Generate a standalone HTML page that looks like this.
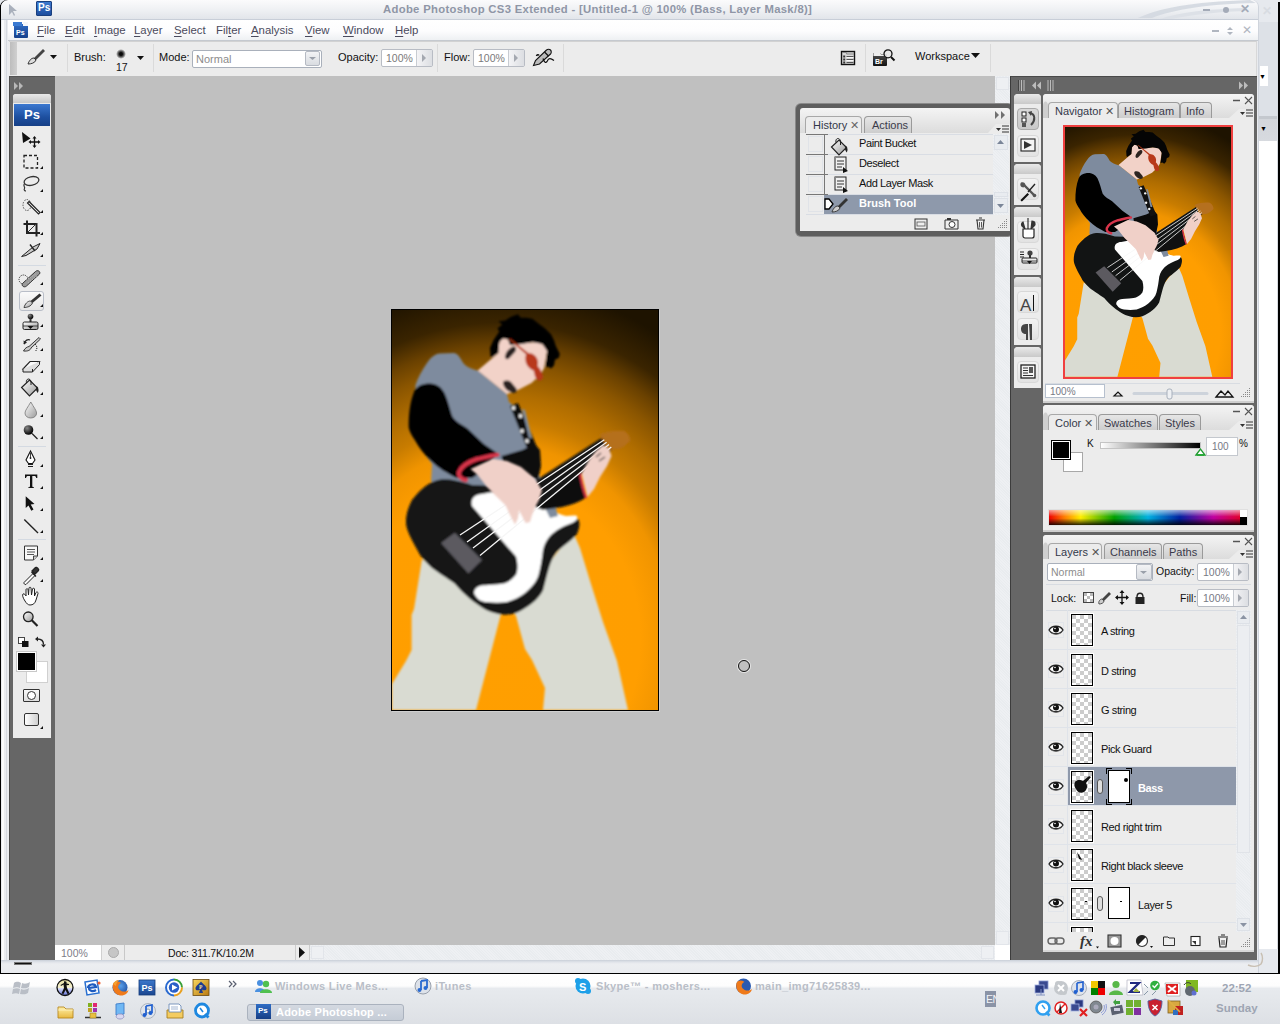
<!DOCTYPE html>
<html><head><meta charset="utf-8">
<style>
*{margin:0;padding:0;box-sizing:border-box}
html,body{width:1280px;height:1024px;overflow:hidden;background:#e6e9ee;font-family:"Liberation Sans",sans-serif;font-size:11px;color:#111}
.a{position:absolute}
.t{position:absolute;white-space:nowrap;line-height:1}
svg{position:absolute;overflow:visible}
.tab{position:absolute;height:16px;border:1px solid #9a9a9a;border-bottom:none;border-radius:4px 4px 0 0;background:linear-gradient(#e6e6e6,#cdcdcd);font-size:11px;color:#3a3a4a;padding:2px 0 0 7px;white-space:nowrap;line-height:12px}
.tab.on{background:#ececec;border-color:#a8a8a8;color:#33384a}
.ph{position:absolute;background:linear-gradient(#f4f4f4,#dcdcdc);border-radius:3px 3px 0 0}
.pb{position:absolute;background:#ececec}
.row{position:absolute;left:0;width:168px;height:39px;border-top:1px solid #dfe3e9}
.eye{position:absolute;left:4px;top:12px;width:16px;height:16px;border:1px solid #e2e5ea;background:#ededed}
.th{position:absolute;left:27px;top:4px;width:22px;height:32px;border:1px solid #000;box-shadow:0 0 0 1px #fff;background-color:#fff;background-image:linear-gradient(45deg,#ccc 25%,transparent 25%,transparent 75%,#ccc 75%),linear-gradient(45deg,#ccc 25%,transparent 25%,transparent 75%,#ccc 75%);background-size:8px 8px;background-position:4px 0,0 4px}
.ln{position:absolute;top:15px;font-size:11px;color:#111;letter-spacing:-0.4px}
.tb{position:absolute;width:22px;height:22px;border:1px solid #d8d8d8;border-radius:4px;background:linear-gradient(#f3f3f3,#e2e2e2)}
.tg{position:absolute;left:1014px;width:27px;background:#ececec;border-radius:4px 4px 0 0}
.tgh{position:absolute;left:0;top:0;width:27px;height:10px;background:linear-gradient(#e9e9e9,#c9c9c9);border-radius:4px 4px 0 0}
</style></head><body>
<!-- background window at right -->
<div class="a" style="left:1252px;top:0;width:28px;height:974px;background:#e6e9ee;border-radius:0 7px 0 0"></div>
<div class="a" style="left:1259px;top:22px;width:19px;height:94px;background:#dde1e7"></div>
<div class="a" style="left:1260px;top:66px;width:8px;height:20px;background:#fff"></div>
<div class="t" style="left:1259px;top:73px;font-size:7px;color:#000">▼</div>
<div class="a" style="left:1259px;top:116px;width:19px;height:25px;background:linear-gradient(#c4c8ce 0,#c4c8ce 3px,#d3d6db 3px,#d7dadf 100%)"></div>
<div class="t" style="left:1260px;top:125px;font-size:7px;color:#000">▼</div>
<div class="a" style="left:1259px;top:141px;width:18px;height:808px;background:#fff"></div>
<div class="a" style="left:1277px;top:22px;width:1px;height:927px;background:#d8dce2"></div>
<div class="a" style="left:1278px;top:2px;width:2px;height:972px;background:#000"></div>
<div class="t" style="left:1262px;top:5px;font-size:12px;color:#d8dce2;font-weight:bold">✕</div>
<!-- main window frame -->
<div class="a" style="left:0;top:0;width:1259px;height:974px;background:#e9ebef;border-radius:7px 7px 0 0;border-right:1px solid #cfd4dc"></div>
<div class="a" style="left:0;top:5px;width:1px;height:969px;background:#000"></div>
<div class="a" style="left:0;top:0;width:8px;height:8px;border-top:1px solid #000;border-left:1px solid #000;border-radius:7px 0 0 0"></div>
<div class="a" style="left:2px;top:20px;width:2px;height:940px;background:#fafbfc"></div>
<div class="a" style="left:6px;top:20px;width:1px;height:940px;background:#d5d9e0"></div>
<div class="a" style="left:0;top:973px;width:1280px;height:1px;background:#000"></div>

<!-- title bar -->
<div class="a" style="left:1px;top:0;width:1257px;height:20px;background:linear-gradient(#fbfbfc,#eef0f3 55%,#e2e5ea);border-radius:7px 7px 0 0;border-bottom:1px solid #c8ced8"></div>
<svg style="left:1120px;top:0" width="140" height="20"><path d="M18,18 C40,8 70,2 130,0 L136,3 C90,4 55,9 32,18 Z" fill="#d3d8e0" opacity="0.9"/><path d="M40,19 C60,12 90,9 125,8 L126,11 C95,12 70,15 52,19 Z" fill="#dde1e7"/></svg>
<svg style="left:6px;top:2px" width="14" height="16"><path d="M3,2 L3,13 L6,10 L8,14 L9,13 L7,9 L11,9 Z" fill="#a9b0bc"/></svg>
<div class="a" style="left:36px;top:1px;width:16px;height:15px;background:linear-gradient(#3d7ad0,#1c4d9e);border:1px solid #1a3f7e;border-radius:1px"></div>
<div class="t" style="left:38px;top:3px;font-size:10px;font-weight:bold;color:#fff">Ps</div>
<div class="t" style="left:383px;top:4px;font-size:11.3px;font-weight:bold;color:#8f96a6;letter-spacing:0.31px">Adobe Photoshop CS3 Extended - [Untitled-1 @ 100% (Bass, Layer Mask/8)]</div>
<div class="a" style="left:1203px;top:9px;width:7px;height:2px;background:#a4abb8"></div>
<div class="a" style="left:1223px;top:7px;width:6px;height:6px;background:#a4abb8;border-radius:50%"></div>
<div class="t" style="left:1240px;top:3px;font-size:12px;font-weight:bold;color:#a4abb8">✕</div>

<!-- menu bar -->
<div class="a" style="left:8px;top:20px;width:1250px;height:21px;background:linear-gradient(#ffffff 0%,#fdfdfe 55%,#eef0f3 100%);border-bottom:1px solid #c5c9cf"></div>
<div class="a" style="left:14px;top:24px;width:14px;height:14px;background:linear-gradient(#2e6bc4,#17418c);border-radius:1px"></div>
<div class="a" style="left:13px;top:22px;width:9px;height:4px;background:#3a7ad2"></div>
<div class="a" style="left:23px;top:22px;width:5px;height:4px;background:#f4f6fa"></div>
<div class="t" style="left:16px;top:29px;font-size:7px;font-weight:bold;color:#fff">Ps</div>
<div class="t" style="left:37px;top:25px;font-size:11.4px;color:#4a4a5c;text-decoration-thickness:1px;text-underline-offset:2px">
<span style="position:absolute;left:0"><u>F</u>ile</span>
<span style="position:absolute;left:28px"><u>E</u>dit</span>
<span style="position:absolute;left:57px"><u>I</u>mage</span>
<span style="position:absolute;left:97px"><u>L</u>ayer</span>
<span style="position:absolute;left:137px"><u>S</u>elect</span>
<span style="position:absolute;left:179px">Fil<u>t</u>er</span>
<span style="position:absolute;left:214px"><u>A</u>nalysis</span>
<span style="position:absolute;left:268px"><u>V</u>iew</span>
<span style="position:absolute;left:306px"><u>W</u>indow</span>
<span style="position:absolute;left:358px"><u>H</u>elp</span>
</div>
<div class="a" style="left:1212px;top:30px;width:7px;height:2px;background:#b0b6c0"></div>
<svg style="left:1226px;top:26px" width="8" height="10"><path d="M1,4 L4,1 L7,4 Z M1,6 L4,9 L7,6 Z" fill="#b0b6c0"/></svg>
<div class="t" style="left:1242px;top:24px;font-size:12px;color:#b0b6c0">✕</div>

<!-- options bar -->
<div class="a" style="left:9px;top:41px;width:1248px;height:35px;background:#ececec;border-top:1px solid #d2d2d2;border-right:1px solid #d8d8d8"></div>
<div class="a" style="left:10px;top:42px;width:7px;height:33px;background:linear-gradient(90deg,#bdbdbd,#d0d0d0)"></div>
<div class="a" style="left:67px;top:44px;width:1px;height:28px;background:#dadada"></div>
<div class="a" style="left:153px;top:44px;width:1px;height:28px;background:#dadada"></div>
<div class="a" style="left:437px;top:44px;width:1px;height:28px;background:#dadada"></div>
<div class="a" style="left:865px;top:44px;width:1px;height:28px;background:#dadada"></div>
<div class="a" style="left:990px;top:44px;width:1px;height:28px;background:#dadada"></div>
<div class="a" style="left:563px;top:44px;width:1px;height:28px;background:#dadada"></div>
<svg style="left:26px;top:47px" width="22" height="20"><path d="M17,2 L19,4 L10,13 L8,11 Z" fill="#444"/><path d="M8,11 C5,11 3,14 2,17 C5,17 9,16 10,13 Z" fill="#ddd" stroke="#333" stroke-width="1"/></svg>
<svg style="left:50px;top:55px" width="8" height="5"><path d="M0,0 L7,0 L3.5,4 Z" fill="#111"/></svg>
<div class="t" style="left:74px;top:52px;font-size:11px;color:#111">Brush:</div>
<div class="a" style="left:116px;top:49px;width:10px;height:10px;border-radius:50%;background:radial-gradient(circle,#000 0,#111 22%,rgba(0,0,0,0.55) 45%,rgba(0,0,0,0) 70%)"></div>
<div class="t" style="left:116px;top:62px;font-size:10.5px;color:#111">17</div>
<svg style="left:137px;top:56px" width="8" height="5"><path d="M0,0 L7,0 L3.5,4 Z" fill="#111"/></svg>
<div class="t" style="left:159px;top:52px;font-size:11px;color:#111">Mode:</div>
<div class="a" style="left:192px;top:50px;width:130px;height:18px;background:#fff;border:1px solid #a9b0bb;border-radius:2px"></div>
<div class="a" style="left:305px;top:51px;width:15px;height:15px;background:linear-gradient(#f2f3f5,#d9dce1);border:1px solid #b5bac3;border-radius:2px"></div>
<svg style="left:309px;top:57px" width="8" height="4"><path d="M0,0 L7,0 L3.5,3 Z" fill="#9aa0aa"/></svg>
<div class="t" style="left:196px;top:54px;font-size:11px;color:#8c8c8c">Normal</div>
<div class="t" style="left:338px;top:52px;font-size:11px;color:#111">Opacity:</div>
<div class="a" style="left:381px;top:49px;width:52px;height:18px;background:#fff;border:1px solid #b8bcc4;border-radius:2px"></div>
<div class="a" style="left:416px;top:50px;width:16px;height:16px;background:linear-gradient(90deg,#f4f4f6,#dcdee2);border-left:1px solid #c8ccd2"></div>
<svg style="left:422px;top:54px" width="5" height="8"><path d="M0,0 L4,4 L0,8 Z" fill="#a4a8b0"/></svg>
<div class="t" style="left:386px;top:53px;font-size:10.5px;color:#7a7a7a">100%</div>
<div class="t" style="left:444px;top:52px;font-size:11px;color:#111">Flow:</div>
<div class="a" style="left:473px;top:49px;width:52px;height:18px;background:#fff;border:1px solid #b8bcc4;border-radius:2px"></div>
<div class="a" style="left:508px;top:50px;width:16px;height:16px;background:linear-gradient(90deg,#f4f4f6,#dcdee2);border-left:1px solid #c8ccd2"></div>
<svg style="left:514px;top:54px" width="5" height="8"><path d="M0,0 L4,4 L0,8 Z" fill="#a4a8b0"/></svg>
<div class="t" style="left:478px;top:53px;font-size:10.5px;color:#7a7a7a">100%</div>
<svg style="left:533px;top:48px" width="24" height="20"><path d="M0.5,17.5 L2.5,12.5 L13.5,2 C14.5,1 16.5,1 17.5,2 C18.5,3 18.5,5 17.5,6 L6.5,16 Z" fill="#bbb" stroke="#111" stroke-width="1.1"/><path d="M11.5,4 L15.5,8" stroke="#111" stroke-width="1.2"/><path d="M3.5,8 C4,6.5 5.5,6.5 6,7.5" stroke="#111" stroke-width="1.6" fill="none"/><path d="M10,10.5 C11,14.5 13,15.5 14.3,13 C15.5,10 17.5,10 21,12.5" fill="none" stroke="#111" stroke-width="1.2"/></svg>
<svg style="left:840px;top:50px" width="17" height="17"><rect x="1.5" y="1.5" width="13" height="13" fill="#d8d8d8" stroke="#111" stroke-width="1.4"/><path d="M2,2.5 H6 L7,4 H14" stroke="#888" stroke-width="1.2" fill="none"/><rect x="3.2" y="5.5" width="2" height="2" fill="#333"/><rect x="3.2" y="8.5" width="2" height="2" fill="#333"/><rect x="3.2" y="11.5" width="2" height="2" fill="#333"/><path d="M6.5,6.5 H13.5 M6.5,9.5 H13.5 M6.5,12.5 H13.5" stroke="#555" stroke-width="1.2"/><path d="M6.5,7.5 H13.5 M6.5,10.5 H13.5" stroke="#fff" stroke-width="0.8"/></svg>
<svg style="left:872px;top:49px" width="26" height="18"><defs><linearGradient id="brg" x1="0" y1="0" x2="0" y2="1"><stop offset="0" stop-color="#555"/><stop offset="1" stop-color="#111"/></linearGradient></defs><path d="M1,4 H8 L9,5 H15 V16 C15,16.5 14.5,17 14,17 H2 C1.5,17 1,16.5 1,16 Z" fill="url(#brg)"/><path d="M1.5,4 H8 L9,5.5 H13 V7 H1.5 Z" fill="#eee"/><text x="3" y="14.5" font-size="7" font-family="Liberation Sans" font-weight="bold" fill="#fff">Br</text><circle cx="16" cy="4.8" r="4" fill="#e8e8e8" fill-opacity="0.9" stroke="#111" stroke-width="1.3"/><path d="M19,8 L22.5,11.5" stroke="#111" stroke-width="2"/></svg>
<div class="t" style="left:915px;top:51px;font-size:11px;color:#111">Workspace</div>
<svg style="left:971px;top:53px" width="10" height="6"><path d="M0,0 L9,0 L4.5,5 Z" fill="#111"/></svg>
<!-- workspace -->
<div class="a" style="left:9px;top:76px;width:1248px;height:885px;background:#c0c0c0"></div>
<!-- tools dark column -->
<div class="a" style="left:9px;top:76px;width:46px;height:884px;background:#666;border-left:1px solid #4e4e4e;border-top:1px solid #555"></div>
<svg style="left:14px;top:82px" width="12" height="8"><path d="M0,0 L4,4 L0,8 Z M5,0 L9,4 L5,8 Z" fill="#b8b8b8"/></svg>
<div class="a" style="left:13px;top:94px;width:38px;height:644px;background:#ececec;border-radius:3px 3px 0 0"></div>
<div class="a" style="left:13px;top:94px;width:38px;height:9px;background:linear-gradient(#e8e8e8,#c8c8c8);border-radius:3px 3px 0 0"></div>
<div class="a" style="left:14px;top:104px;width:36px;height:22px;background:linear-gradient(#3b78d0,#1d4f9f 60%,#163f86)"></div>
<div class="t" style="left:24px;top:108px;font-size:13px;font-weight:bold;color:#fff">Ps</div>
<div class="a" style="left:18px;top:265px;width:28px;height:1px;background:#d4dae2"></div>
<div class="a" style="left:18px;top:446px;width:28px;height:1px;background:#d4dae2"></div>
<div class="a" style="left:18px;top:539px;width:28px;height:1px;background:#d4dae2"></div>
<div class="a" style="left:19px;top:291px;width:25px;height:20px;border:1px solid #b9bec8;border-radius:3px;background:linear-gradient(#fafafa,#e6e6e6)"></div>
<svg style="left:13px;top:94px" width="38" height="644">
<defs>
<linearGradient id="tg1" x1="0" y1="0" x2="1" y2="1"><stop offset="0" stop-color="#fff"/><stop offset="1" stop-color="#9a9a9a"/></linearGradient>
<radialGradient id="tg2" cx="0.35" cy="0.3" r="0.7"><stop offset="0" stop-color="#888"/><stop offset="1" stop-color="#000"/></radialGradient>
</defs>
<path fill="#111" d="M27,75 l3,0 l0,-3 z M27,98 l3,0 l0,-3 z M27,119 l3,0 l0,-3 z M27,141 l3,0 l0,-3 z M27,163 l3,0 l0,-3 z M27,191 l3,0 l0,-3 z M27,213 l3,0 l0,-3 z M27,233 l3,0 l0,-3 z M27,257 l3,0 l0,-3 z M27,279 l3,0 l0,-3 z M27,301 l3,0 l0,-3 z M27,323 l3,0 l0,-3 z M27,345 l3,0 l0,-3 z M27,373 l3,0 l0,-3 z M27,395 l3,0 l0,-3 z M27,417 l3,0 l0,-3 z M27,439 l3,0 l0,-3 z M27,466 l3,0 l0,-3 z M27,488 l3,0 l0,-3 z M27,635 l3,0 l0,-3 z"/>
<!-- move -->
<path d="M9,38 L17.5,44.5 L10,49 Z" fill="#111"/>
<path d="M21.5,43.5 V52.5 M17,48 H26" stroke="#111" stroke-width="1.3"/>
<path d="M21.5,42 l-2,2.5 h4 z M21.5,54 l-2,-2.5 h4 z M15.5,48 l2.5,-2 v4 z M27.5,48 l-2.5,-2 v4 z" fill="#111"/>
<!-- marquee -->
<rect x="11" y="61.5" width="13.5" height="12.5" fill="none" stroke="#222" stroke-width="1.3" stroke-dasharray="3,2"/>
<!-- lasso -->
<ellipse cx="18.5" cy="87" rx="7.5" ry="4.3" fill="none" stroke="#333" stroke-width="1.3" transform="rotate(-12 18.5 87)"/>
<path d="M11.5,89.5 C9.5,92 12.5,93 11.5,94.5 C10.5,96 12,97 13,97" fill="none" stroke="#333" stroke-width="1.2"/>
<!-- quick selection -->
<ellipse cx="14" cy="111" rx="4" ry="5.5" fill="none" stroke="#555" stroke-width="1" stroke-dasharray="1.5,1.2"/>
<path d="M16,107.5 L27,118.5 L25.5,120 L14.5,109 Z" fill="#fafafa" stroke="#222" stroke-width="1.2"/>
<!-- crop -->
<path d="M14,126.5 V139 H27 M10.5,130 H23.5 V142.5" fill="none" stroke="#222" stroke-width="2"/>
<path d="M14.5,138.5 L24,129" stroke="#333" stroke-width="1"/>
<!-- slice -->
<path d="M8.6,162.5 L20,153 L27,149.5 L24,155 L13,161.5 Z" fill="url(#tg1)" stroke="#222" stroke-width="1"/><path d="M17,150.5 L22,157" stroke="#222" stroke-width="1.4"/>
<!-- healing -->
<circle cx="10.5" cy="185.5" r="4.5" fill="none" stroke="#333" stroke-dasharray="1.2,1"/>
<path d="M9.5,189.5 L22.5,177.5 C24.5,175.5 28,177.5 26.5,180 L13.5,192 C11.5,194 8,192 9.5,189.5 Z" fill="#9a9a9a" stroke="#333" stroke-width="1"/>
<path d="M13,186 L23,180 M15,189 L24,182" stroke="#ccc" stroke-width="0.8" stroke-dasharray="1,1.5"/>
<!-- brush -->
<path d="M26.5,199.5 L28.5,201.5 L19.5,209 L17.5,207 Z" fill="#333"/><path d="M17.5,207 C14.5,207 12,210 11,213.5 C14,213.5 18,212.5 19.5,209 Z" fill="url(#tg1)" stroke="#333" stroke-width="0.9"/>
<!-- clone stamp -->
<circle cx="17.5" cy="222.5" r="2.8" fill="url(#tg2)"/><rect x="16.5" y="224.5" width="2" height="4" fill="#333"/><rect x="10" y="228" width="15" height="7.5" rx="1.5" fill="url(#tg1)" stroke="#222" stroke-width="1"/><path d="M10,232 H25" stroke="#222" stroke-width="0.8"/><path d="M14.5,232 l3,3 l3,-3 z" fill="#111"/>
<!-- history brush -->
<path d="M10.5,257 C12,254 14,253 16,252.5 L26,243.5 L27.5,245 L18,254 C17.5,256 15,257.5 10.5,257 Z" fill="url(#tg1)" stroke="#222" stroke-width="0.9"/>
<path d="M11,250 C12,246 15,245 17,246" fill="none" stroke="#222" stroke-width="1.2"/><path d="M10.5,246.5 l0.5,4 l3,-2 z" fill="#222"/>
<path d="M22,250 C24.5,252 24.5,256 22,257.5" fill="none" stroke="#222" stroke-dasharray="1.2,1"/>
<!-- eraser -->
<path d="M10,275 L17,267.5 L26.5,267.5 L19.5,275 Z" fill="#fafafa" stroke="#222" stroke-width="1.1"/><path d="M10,275 V278 H19.5 L26.5,270.5 V267.5 M19.5,275 V278" fill="#ddd" stroke="#222" stroke-width="1"/>
<!-- paint bucket -->
<path d="M8.6,293.5 L16.5,286 L24.5,294 L16.5,302 Z" fill="url(#tg1)" stroke="#222" stroke-width="1.2"/><path d="M13.5,289 C12.5,284.5 17,283.5 18,287.5 L18,291" fill="none" stroke="#222" stroke-width="1"/><path d="M23.5,292 C26,294 26,297.5 24.5,299 L23,296 Z" fill="#222"/>
<!-- blur -->
<path d="M17.8,308 C15,313 12,316.5 12,319 C12,322 14.5,324 17.8,324 C21,324 23.6,322 23.6,319 C23.6,316.5 20.5,313 17.8,308 Z" fill="url(#tg1)" stroke="#777" stroke-width="0.8"/>
<!-- dodge/burn -->
<circle cx="15.5" cy="336" r="4.8" fill="url(#tg2)"/><path d="M19,339.5 L24.5,345" stroke="#222" stroke-width="1.3"/>
<!-- pen -->
<path d="M17.5,357 L13,366 L15.5,369.5 H19.5 L22,366 Z" fill="#fff" stroke="#111" stroke-width="1.1"/><circle cx="17.5" cy="364" r="0.9" fill="#111"/><path d="M17.5,359 V363" stroke="#111" stroke-width="0.8"/><path d="M15,370.5 H20 M15,372.5 H20" stroke="#222" stroke-width="1.1"/>
<!-- type -->
<path d="M12,380.5 H24.3 V384 H23.2 C23,382.5 22.5,382 21,382 H19.3 V392 C19.3,393 19.8,393.3 21,393.3 V394 H15.3 V393.3 C16.5,393.3 17,393 17,392 V382 H15.3 C13.8,382 13.3,382.5 13.1,384 H12 Z" fill="#111"/>
<!-- path selection -->
<path d="M12.7,402.3 L12.7,414 L15.5,411.5 L18.3,416.7 L20.5,415.6 L17.7,410.5 L21.5,410 Z" fill="#111"/>
<!-- line -->
<path d="M11.3,425.5 L25,439" stroke="#222" stroke-width="1.4"/>
<!-- notes -->
<path d="M11.5,452 H24.5 V462 L20.5,466 H11.5 Z" fill="#f8f8f8" stroke="#333" stroke-width="1"/><path d="M20.5,466 V462 H24.5" fill="#ccc" stroke="#333" stroke-width="0.9"/><path d="M14,455.5 H22 M14,458 H22 M14,460.5 H21" stroke="#444" stroke-width="0.9"/>
<!-- eyedropper -->
<path d="M11,488.5 L20,479.5 L22,481.5 L13,490.5 C12,491 10.5,489.5 11,488.5 Z" fill="#fafafa" stroke="#222" stroke-width="1"/><path d="M19,477 L22.5,473.5 C23.5,472.5 26.5,475.5 25.5,476.5 L22,480 Z M18.5,478 L23,482.5" fill="#333" stroke="#222" stroke-width="1.3"/>
<!-- hand -->
<path d="M12,507 C10,504 9,501 10,500 C11,499 12.5,501 13,502 L13,495.5 C13,494.5 15,494.5 15,495.5 L15.5,501 L16,494 C16,493 18,493 18,494 L18.5,501 L19.5,495 C19.5,494 21.5,494 21.5,495 L21.5,502 L23,498.5 C23.5,497.5 25.5,498 25,499.5 L23,506 C22,509.5 20,511 17,511 C15,511 13.5,509.5 12,507 Z" fill="#fff" stroke="#222" stroke-width="1"/>
<!-- zoom -->
<circle cx="15.3" cy="522.8" r="4.8" fill="url(#tg1)" stroke="#222" stroke-width="1.3"/><path d="M18.8,526.3 L24.5,532" stroke="#222" stroke-width="2.2"/>
<!-- default colors / swap -->
<rect x="5.5" y="543.5" width="6" height="6" fill="#fff" stroke="#333" stroke-width="0.9"/><rect x="9" y="547" width="6.5" height="6" fill="#111"/>
<path d="M24.5,545 C28.5,545 30.5,547 30.5,550.5" fill="none" stroke="#222" stroke-width="1.3"/><path d="M22,545 l3,-2.5 v5 z M30.5,553.5 l-2.5,-3 h5 z" fill="#222"/>
</svg>
<div class="a" style="left:26px;top:661px;width:22px;height:22px;background:#fff;border:1px solid #d0d0d0"></div>
<div class="a" style="left:16px;top:651px;width:21px;height:21px;background:#000;border:1px solid #c8c8c8;box-shadow:inset 0 0 0 1px #fff"></div>
<div class="a" style="left:23px;top:689px;width:17px;height:13px;border:1px solid #333;border-radius:1px;background:linear-gradient(#fafafa,#ddd)"></div>
<div class="a" style="left:27px;top:691px;width:9px;height:9px;border:1px solid #333;border-radius:50%;background:#fff"></div>
<div class="a" style="left:24px;top:713px;width:15px;height:13px;border:1px solid #333;border-radius:2px;background:linear-gradient(90deg,#fff,#cfcfcf)"></div>


<!-- canvas doc scrollbars -->
<div class="a" style="left:995px;top:76px;width:15px;height:870px;background-color:#eef0f3;background-image:repeating-linear-gradient(45deg,#e9ecef 0 1px,transparent 1px 2px)"></div>
<div class="a" style="left:996px;top:77px;width:13px;height:13px;background:#eef0f3;border:1px solid #e2e5ea"></div>
<div class="a" style="left:996px;top:931px;width:13px;height:14px;background:#eef0f3;border:1px solid #e2e5ea"></div>
<!-- status bar -->
<div class="a" style="left:55px;top:945px;width:955px;height:15px;background-color:#eef0f3;background-image:repeating-linear-gradient(45deg,#e9ecef 0 1px,transparent 1px 2px)"></div>
<div class="a" style="left:55px;top:945px;width:47px;height:15px;background:#fff;border-right:1px solid #d0d0d0"></div>
<div class="t" style="left:61px;top:948px;font-size:10.5px;color:#7d7d88">100%</div>
<div class="a" style="left:102px;top:945px;width:23px;height:15px;background:#ececec;border-right:1px solid #c8c8c8"></div>
<div class="a" style="left:108px;top:947px;width:11px;height:11px;border-radius:50%;background:#c6c6c6;border:1px solid #aaa"></div>
<div class="a" style="left:125px;top:945px;width:170px;height:15px;background:#ececec"></div>
<div class="t" style="left:168px;top:948px;font-size:10.5px;color:#111;letter-spacing:-0.2px">Doc: 311.7K/10.2M</div>
<div class="a" style="left:295px;top:945px;width:15px;height:15px;background:#ececec;border-left:1px solid #ccc;border-right:1px solid #ccc"></div>
<svg style="left:299px;top:947px" width="8" height="11"><path d="M0,0 L6,5.5 L0,11 Z" fill="#111"/></svg>
<div class="a" style="left:995px;top:945px;width:15px;height:15px;background:#fff"></div>
<div class="a" style="left:981px;top:946px;width:13px;height:13px;background:#eef0f3;border:1px solid #e2e5ea"></div>
<div class="a" style="left:311px;top:946px;width:13px;height:13px;background:#eef0f3;border:1px solid #e2e5ea"></div>
<!-- artwork symbol -->
<svg width="0" height="0" style="position:absolute">
<defs>
<radialGradient id="bg" cx="107" cy="330" r="355" gradientUnits="userSpaceOnUse" gradientTransform="translate(107 330) scale(0.886 1) translate(-107 -330)">
<stop offset="0" stop-color="#ff9f00"/>
<stop offset="0.45" stop-color="#ff9e00"/>
<stop offset="0.55" stop-color="#f09400"/>
<stop offset="0.62" stop-color="#c87c00"/>
<stop offset="0.69" stop-color="#b06d00"/>
<stop offset="0.774" stop-color="#8a5500"/>
<stop offset="0.83" stop-color="#6a4100"/>
<stop offset="0.894" stop-color="#3a2400"/>
<stop offset="1.0" stop-color="#1e1300"/>
</radialGradient>

<symbol id="art" viewBox="0 0 266 400">
<g>
<!-- pants -->
<path fill="#d9dbd2" d="M30,249 L110,300 L84,400 L0,400 L0,374 L14,351 L19.6,340 L19.6,305 L22,299 Z"/>
<path fill="#d9dbd2" d="M120,300 L150,262 L181,222 L188,238 L199,274 L211,312 L225,351 L236,400 L151,400 L153,378 L140,350 L133,339 L124,306 Z"/>
<!-- shirt -->
<path fill="#7e8b9e" d="M23.5,75 C26,68 30,60 35,53 C39,47 43,44 48,43.5 L62,43 C67,44 69,50 72,54 C75,57 80,59.5 86.4,60.8 L115,84 L117,92 L121,95 L135,125 L140,139 L150,175 L165,206 L140,215 L60,190 L39,171 L40,154 L23,130 Z"/>
<!-- neck & face -->
<path fill="#f2d2c8" d="M85.8,60.4 L106.3,42.9 C106,35 108,28.5 111.5,28.2 C115,28 118,31 118,34 L131,33 L146,32 C151,34 155,37 155,42 L152,58.5 L148,65 L139.5,73 L126,80 L115,84 Z"/>
<!-- hair -->
<path fill="#050505" d="M98.5,45.8 L98,38 L101.4,30.2 L107.3,21.4 L105.5,18.4 L110.2,14.5 L106.5,11.2 L113.2,10.6 L119,6.7 L125.9,4.3 L128.8,7.7 L134.6,7.7 L140.5,8.7 L146.4,13.6 L153.2,18.4 L159,24.3 L162,30.2 L163.9,36 L167.8,43.8 L166.9,47.7 L163,49.7 L162,55.5 L159,58.5 L156,56.5 L153.2,57.5 L155.1,40.9 L150.3,34 L140.5,32.1 L129.8,34 L118,35 L116,29.2 L111.2,28.2 L107.3,32.1 L106.3,42.9 L99.5,47.7 Z"/>
<!-- sideburn & goatee -->
<path fill="#2c2420" d="M113,47 C113,43 117,38 121,36.5 C124,36 125,39 123,42 L117,48.5 C115,50 113,49 113,47 Z"/>
<path fill="#2c2420" d="M111,73 C111,70 116,70 119,72 L124,78 C126,81 124,83 121,83 C116,82 111,77 111,73 Z"/>
<!-- glasses -->
<path fill="#b8391a" d="M116.5,29 L118,28.8 L137.5,44 L136,46 Z"/>
<path fill="#b8391a" d="M134.5,44 C138,42 143,44 145,48.5 C146.5,51.5 146,55 145.5,56 C148.5,59 151,63.5 150.8,67.5 C150.3,70.5 147,71.5 144.8,69.5 C142.5,67 142.5,63 141.5,60.5 C137.5,59 134,55 133.5,50.5 C133.2,47.5 133.5,45 134.5,44 Z"/>
<!-- left black sleeve -->
<path fill="#000" d="M16.7,117.5 C16.5,105 18,92 22,82 C24,77 28,74.5 35,73.5 C42,73 48,75 52,82 C56,90 58,100 60.4,106.6 C64,112 70,115 75.5,118.5 L91.9,134 L105,143 L96,158 L80,168 L64.5,168 C55,163 46,158 39.9,151.7 C32,144 27,138 23.5,131 C20,126 17.5,122 16.7,117.5 Z"/>
<!-- black under strap (far arm / shoulder) -->
<path fill="#0a0a0a" d="M109.6,146 L130,140 L143,134 L148,140 L149,156 L146,170 L112,160 Z"/>
<!-- strap -->
<path fill="#111" d="M118,96 L126,93 L140,125 L146,140 L137,143 L130,126 Z"/>
<path fill="#7e8b9e" d="M130,99 L133,100 L140,128 L137,128 Z"/>
<g fill="#f4f4f4"><circle cx="121.5" cy="98" r="1.9"/><circle cx="128.5" cy="106" r="1.9"/><circle cx="130" cy="121" r="1.9"/><circle cx="135" cy="131" r="1.9"/></g>
<!-- red cuff -->
<path fill="none" stroke="#d8344a" stroke-width="4" stroke-linecap="round" d="M105.5,144.8 C96,146 90,148 85,149 C76,152 69,157 67,162 C66,166 69,169 74,170"/>
<!-- guitar body -->
<path fill="#121414" d="M43,171 C50,168 62,169 80,175 L110,176 L150,172 L160,199 L169,208 L182.8,207 C188,209 189,214 185,224 C178,232 168,238 164.7,242 C158,250 156,262 151,280.6 C146,290 136,298 124,303 C112,307 100,303 92,298.7 C84,294 72,285 62.8,273.8 C55,268 45,262 40,258 C32,250 28,246 26.5,242 C20,230 14,220 14,212.7 C14,206 15,200 20,190 C28,180 36,173 43,171 Z"/>
<!-- pickguard -->
<path fill="#fff" d="M80,196 C78,189 83,184 90,184 L132,176 L153,190 L160,199 C163,202 168,205 173.8,205.9 C178,206 182,205 185,206 C186,209 184,211 180.6,212.7 C174,215 167,218 160,224 C156,228 153,232 151,239.8 C150,248 149,256 146.6,264.8 C145,271 140,277 133,283 C128,287 122,290 114.9,292 C108,293 102,293 94.5,292 C90,292 86,290 83,285 C81,283 82,278 87.7,276 C92,275 100,275 110,273.8 C115,273 120,270 124,264.8 C126,260 126,254 124,246.6 Z"/>
<!-- pickup -->
<path fill="#5c5a60" d="M49,233 L62.8,222.8 L90,250 L76.4,263.6 Z"/>
<!-- neck -->
<path fill="#121414" d="M143,171 L211,127 L214,126.5 L221,136 L220.5,139 L148,199 L141,196 Z"/>
<!-- right arm sleeve & hand -->
<path fill="#7e8b9e" d="M152,196 L162,190 L166,206 L158,208 Z"/>
<path fill="#111" d="M146,196 L150,194.5 L188,163 L194.7,187.2 C186,193 174,197 160.7,198.5 L150,200 Z"/>
<path fill="#d8344a" d="M187.2,164 L189.5,163.5 C190.5,172 192.5,180 195.5,187 L193.5,188.5 C190.5,181 188.5,173 187.2,164 Z"/>
<!-- headstock -->
<path fill="#b5701f" d="M207.6,124.6 C215,121 225,120 232,121 C236,123 238,127 238,131 C234,135 230,138 226,139 L216,140 C214,138 213,136 213,134 Z"/>
</g>
</symbol>
<symbol id="art_s" viewBox="0 0 266 400">
<!-- strings -->
<g stroke="#f6f6f6" stroke-width="1.3" fill="none">
<path d="M68,225 L212.3,129.8"/><path d="M75,232 L214.6,132.2"/><path d="M81,238 L217,134.5"/><path d="M88,245.5 L219.3,136.9"/>
</g>
</symbol>
<symbol id="art_h" viewBox="0 0 266 400">
<!-- forearm (strumming) -->
<path fill="#f0d0c8" d="M78.5,159 L100.8,148.8 L115,151 L129,157 L143,168.7 L150,180.4 L147,190 L144,195.6 L140,205 L138,212 L133.6,213 L130,206 L127,200 L126,208 L123,214.4 L118,205 L113.7,195.6 L104,186 L95,177 L85.6,165 Z"/>
<path fill="#f0d0c8" d="M189.5,163.5 L197,150 L204,141 L211,135 L217,138.5 L219.5,146 L215,156 L208,167 L202,179 L195.5,187 Z"/>
<g stroke="#121414" stroke-width="1.2" opacity="0.85"><path d="M204,147 L209,143"/><path d="M207,151 L213,147"/></g>
</symbol>
</defs>
</svg>

<!-- canvas -->
<div class="a" style="left:391px;top:309px;width:268px;height:402px;border:1px solid #000;background:#000"></div>
<svg style="left:392px;top:310px" width="266" height="400"><defs><filter id="bl" x="0" y="0" width="266" height="400" filterUnits="userSpaceOnUse"><feGaussianBlur stdDeviation="0.8"/></filter></defs><rect width="266" height="400" fill="url(#bg)"/><g filter="url(#bl)"><use href="#art" width="266" height="400"/></g><use href="#art_s" width="266" height="400"/><g filter="url(#bl)"><use href="#art_h" width="266" height="400"/></g></svg>
<div class="a" style="left:659px;top:310px;width:1px;height:402px;background:#cfcfcf"></div>
<div class="a" style="left:392px;top:711px;width:268px;height:1px;background:#cfcfcf"></div>
<!-- cursor circle -->
<div class="a" style="left:738px;top:660px;width:12px;height:12px;border:1px solid #111;border-radius:50%;box-shadow:0 0 0 1px rgba(255,255,255,0.6)"></div>
<!-- History floating panel -->
<div class="a" style="left:796px;top:104px;width:217px;height:132px;background:#5e5e5e;border-radius:5px;box-shadow:0 0 0 1px #8a8a8a"></div>
<div class="ph" style="left:800px;top:108px;width:210px;height:25px"></div>
<svg style="left:995px;top:111px" width="12" height="8"><path d="M0,0 L4,4 L0,8 Z M6,0 L10,4 L6,8 Z" fill="#707070"/></svg>
<svg style="left:988px;top:123px" width="22" height="10"><path d="M0,10 L8,1 L22,1 L22,10 Z" fill="#ececec"/><path d="M8,5 L13,5 L10.5,8 Z" fill="#333"/><path d="M14,3 H21 M14,6 H21 M14,9 H21" stroke="#333" stroke-width="1"/></svg>
<div class="tab on" style="left:805px;top:116px;width:57px;height:17px">History <span style="color:#666">✕</span></div>
<div class="tab" style="left:864px;top:116px;width:48px;height:17px">Actions</div>
<div class="pb" style="left:800px;top:133px;width:210px;height:98px"></div>
<div class="a" style="left:806px;top:134px;width:188px;height:1px;background:#d9dde4"></div>
<div class="a" style="left:806px;top:154px;width:188px;height:1px;background:#d9dde4"></div>
<div class="a" style="left:806px;top:174px;width:188px;height:1px;background:#d9dde4"></div>
<div class="a" style="left:806px;top:194px;width:188px;height:1px;background:#d9dde4"></div>
<div class="a" style="left:806px;top:214px;width:188px;height:1px;background:#d9dde4"></div>
<div class="a" style="left:806px;top:134px;width:22px;height:1px;background:#777"></div>
<div class="a" style="left:806px;top:154px;width:22px;height:1px;background:#777"></div>
<div class="a" style="left:806px;top:174px;width:22px;height:1px;background:#777"></div>
<div class="a" style="left:806px;top:194px;width:22px;height:1px;background:#777"></div>
<div class="a" style="left:824px;top:134px;width:1px;height:61px;background:#777"></div>
<div class="a" style="left:808px;top:136px;width:15px;height:16px;border:1px solid #e0e3e8"></div>
<div class="a" style="left:808px;top:156px;width:15px;height:16px;border:1px solid #e0e3e8"></div>
<div class="a" style="left:808px;top:176px;width:15px;height:16px;border:1px solid #e0e3e8"></div>
<div class="a" style="left:808px;top:196px;width:15px;height:16px;border:1px solid #e0e3e8"></div>
<div class="a" style="left:824px;top:195px;width:169px;height:19px;background:#8e99ab"></div>
<svg style="left:824px;top:197px" width="10" height="14"><path d="M1,2 H5 L9,7 L5,12 H1 Z" fill="#fff" stroke="#000" stroke-width="1.3"/></svg>
<svg style="left:829px;top:135px" width="24" height="80">
<!-- bucket -->
<defs><linearGradient id="hg1" x1="0" y1="0" x2="1" y2="1"><stop offset="0" stop-color="#fff"/><stop offset="1" stop-color="#999"/></linearGradient></defs><path d="M2.5,12 L10,5 L17.5,12.5 L10,20 Z" fill="url(#hg1)" stroke="#222" stroke-width="1.2"/><path d="M7,7.5 C6,3 10.5,2 11.5,6 L11.5,10" fill="none" stroke="#222" stroke-width="1"/><path d="M16.5,10.5 C19,12.5 19,16 17.5,17.5 L16,14.5 Z" fill="#222"/>
<!-- deselect doc -->
<g transform="translate(0,20)"><rect x="6" y="2" width="11" height="13" fill="#f0f0f0" stroke="#222" stroke-width="1"/><rect x="6" y="1" width="6" height="2" fill="#888"/><path d="M8,6 H15 M8,9 H15 M8,12 H13" stroke="#333" stroke-width="1"/><path d="M14,12 L19,16 L14,18 Z" fill="#111"/></g>
<g transform="translate(0,40)"><rect x="6" y="2" width="11" height="13" fill="#f0f0f0" stroke="#222" stroke-width="1"/><rect x="6" y="1" width="6" height="2" fill="#888"/><path d="M8,6 H15 M8,9 H15 M8,12 H13" stroke="#333" stroke-width="1"/><path d="M14,12 L19,16 L14,18 Z" fill="#111"/></g>
<!-- brush -->
<g transform="translate(0,60)"><path d="M17,3 L19,5 L11,13 L9,11 Z" fill="#333"/><path d="M9,11 C6,11 4,14 3,17 C6,17 10,16 11,13 Z" fill="#ccc" stroke="#333" stroke-width="0.9"/></g>
</svg>
<div class="t" style="left:859px;top:138px;font-size:11px;color:#111;letter-spacing:-0.4px">Paint Bucket</div>
<div class="t" style="left:859px;top:158px;font-size:11px;color:#111;letter-spacing:-0.4px">Deselect</div>
<div class="t" style="left:859px;top:178px;font-size:11px;color:#111;letter-spacing:-0.4px">Add Layer Mask</div>
<div class="t" style="left:859px;top:198px;font-size:11px;color:#fff;font-weight:bold">Brush Tool</div>
<div class="a" style="left:993px;top:134px;width:16px;height:81px;background-color:#eef0f3;background-image:repeating-linear-gradient(45deg,#e9ecef 0 1px,transparent 1px 2px)"></div>
<div class="a" style="left:994px;top:135px;width:14px;height:15px;background:#e9ecf0;border:1px solid #dde1e7"></div>
<div class="a" style="left:994px;top:192px;width:14px;height:5px;background:#e9ecf0;border:1px solid #dde1e7"></div>
<div class="a" style="left:994px;top:198px;width:14px;height:15px;background:#e9ecf0;border:1px solid #dde1e7"></div>
<svg style="left:997px;top:140px" width="8" height="5"><path d="M0,4 L3.5,0 L7,4 Z" fill="#7a8598"/></svg>
<svg style="left:997px;top:204px" width="8" height="5"><path d="M0,0 L3.5,4 L7,0 Z" fill="#7a8598"/></svg>
<svg style="left:914px;top:217px" width="90" height="14">
<rect x="1" y="2" width="12" height="10" fill="#eee" stroke="#333"/><rect x="3" y="5" width="8" height="4" fill="none" stroke="#555" stroke-width="0.8"/>
<path d="M31,3 H44 V12 H31 Z" fill="#eee" stroke="#333"/><circle cx="38" cy="7.5" r="3" fill="#fff" stroke="#333"/><rect x="33" y="1" width="4" height="2" fill="#333"/>
<path d="M62,3 H71 M63,3 L64,12 H69 L70,3" fill="#f0f0f0" stroke="#333" stroke-width="1.1"/><path d="M65,1 H68" stroke="#333"/><path d="M65.5,5 V10.5 M67.5,5 V10.5" stroke="#333" stroke-width="0.8"/>
</svg>
<svg style="left:998px;top:219px" width="10" height="10"><g fill="#888"><rect x="8" y="0" width="1" height="1"/><rect x="6" y="2" width="1" height="1"/><rect x="8" y="2" width="1" height="1"/><rect x="4" y="4" width="1" height="1"/><rect x="6" y="4" width="1" height="1"/><rect x="8" y="4" width="1" height="1"/><rect x="2" y="6" width="1" height="1"/><rect x="4" y="6" width="1" height="1"/><rect x="6" y="6" width="1" height="1"/><rect x="8" y="6" width="1" height="1"/><rect x="0" y="8" width="1" height="1"/><rect x="2" y="8" width="1" height="1"/><rect x="4" y="8" width="1" height="1"/><rect x="6" y="8" width="1" height="1"/><rect x="8" y="8" width="1" height="1"/></g></svg>
<!-- right dock -->
<div class="a" style="left:1010px;top:76px;width:247px;height:884px;background:#666;border-left:1px solid #3c3c3c;border-top:1px solid #4a4a4a"></div>
<svg style="left:1018px;top:80px" width="240" height="12">
<path d="M1,0 V11 M3.5,0 V11 M6,0 V11" stroke="#bcbcbc" stroke-width="1"/><path d="M0.5,0 V11" stroke="#444"/>
<path d="M14,5.5 L18,1.5 V9.5 Z M19,5.5 L23,1.5 V9.5 Z" fill="#bdbdbd"/>
<path d="M30,0 V11 M32.5,0 V11 M35,0 V11" stroke="#bcbcbc" stroke-width="1"/>
<path d="M221,1.5 L225,5.5 L221,9.5 Z M226,1.5 L230,5.5 L226,9.5 Z" fill="#bdbdbd"/>
</svg>
<!-- icon strip groups -->
<div class="tg" style="top:94px;height:68px"><div class="tgh"></div></div>
<div class="tg" style="top:164px;height:41px"><div class="tgh"></div></div>
<div class="tg" style="top:207px;height:68px"><div class="tgh"></div></div>
<div class="tg" style="top:277px;height:68px"><div class="tgh"></div></div>
<div class="tg" style="top:347px;height:41px"><div class="tgh"></div></div>
<div class="tb" style="left:1017px;top:108px;background:linear-gradient(#d9d9d9,#c9c9c9);border-color:#aaa"></div>
<div class="tb" style="left:1017px;top:135px"></div>
<div class="tb" style="left:1017px;top:178px"></div>
<div class="tb" style="left:1017px;top:221px"></div>
<div class="tb" style="left:1017px;top:248px"></div>
<div class="tb" style="left:1017px;top:291px"></div>
<div class="tb" style="left:1017px;top:318px"></div>
<div class="tb" style="left:1017px;top:361px"></div>
<svg style="left:1017px;top:108px" width="22" height="280">
<!-- history -->
<rect x="5" y="4" width="4" height="4" fill="#fff" stroke="#222" stroke-width="1"/><rect x="5" y="10" width="4" height="4" fill="#fff" stroke="#222" stroke-width="1"/><rect x="5" y="15" width="4" height="4" fill="#555"/>
<path d="M13,5 C18,6 19,12 14,17" fill="none" stroke="#444" stroke-width="2"/><path d="M11,4 L15,3 L14,8 Z" fill="#444"/>
<!-- actions -->
<rect x="4" y="31" width="14" height="12" fill="#f4f4f4" stroke="#222" stroke-width="1.1"/><path d="M7,33 L15,37 L7,41 Z" fill="#333"/>
<!-- tool presets -->
<path d="M7,77 L17,87" stroke="#555" stroke-width="2.4"/><path d="M4,74.5 C2.5,76.5 3.5,79.5 6.5,79.5 L8.5,77.5 C8.5,74.5 6,73.5 4,74.5 Z" fill="#555"/><circle cx="17.5" cy="87.5" r="1.8" fill="#555"/><path d="M11,84 L18,76" stroke="#222" stroke-width="1.3"/><path d="M4,91.5 L10.5,85 L12,86.5 L5.5,93 C4.5,94 3,92.5 4,91.5 Z" fill="#111"/>
<!-- brushes -->
<path d="M6,114 C4,115 4,118 6,119 L8,121 Z M11,110 V121 M15,113 C18,113 19,116 17,118 L14,121 Z" fill="#333" stroke="#333" stroke-width="1.2"/><path d="M6,121 H17 V128 C17,129 16,130 15,130 H8 C7,130 6,129 6,128 Z" fill="#fff" stroke="#222" stroke-width="1.2"/>
<!-- clone source -->
<g transform="translate(0,3)"><path d="M3,141 H7 M3,143.5 H7 M3,146 H7" stroke="#222" stroke-width="1"/><circle cx="13" cy="142" r="2.6" fill="#444"/><rect x="12" y="144" width="2" height="3" fill="#333"/><rect x="5" y="147" width="15" height="5" rx="1" fill="#eee" stroke="#222"/><path d="M5,150 H20" stroke="#222" stroke-width="0.8"/><path d="M10,150 L12.5,153 L15,150 Z" fill="#111"/></g>
<!-- character -->
<text x="3" y="203" font-family="Liberation Sans" font-size="17" fill="#444">A</text><path d="M16.5,187 V203" stroke="#111" stroke-width="1"/>
<!-- paragraph -->
<path d="M9,216 C5,216 4,219 4,221 C4,224 6,226 9,226 V232 H11 V216 Z M12,216 H15 V232 H13 Z" fill="#444"/>
<!-- layer comps -->
<rect x="4" y="257" width="14" height="13" fill="#f4f4f4" stroke="#222" stroke-width="1.3"/><path d="M6,260 H11 M6,262.5 H11 M6,265 H11 M6,267.5 H16" stroke="#333" stroke-width="1"/><rect x="12" y="259" width="4" height="6" fill="#555"/>
</svg>

<!-- ===== Navigator panel ===== -->
<div class="a" style="left:1043px;top:94px;width:211px;height:309px;background:#ececec;border-radius:4px 4px 0 0;border-bottom:2px solid #cfcfcf"></div>
<div class="ph" style="left:1043px;top:94px;width:211px;height:24px"></div>
<svg style="left:1043px;top:94px" width="211" height="24"><path d="M0,24 V12 C0,6 5,6 5,12 V24 Z" fill="#cfcfcf"/><path d="M186,24 L196,15 H211 V24 Z" fill="#ececec"/><path d="M197,18 L202,18 L199.5,21 Z" fill="#333"/><path d="M203,16 H210 M203,19 H210 M203,22 H210" stroke="#333" stroke-width="1"/><path d="M190,6.5 H197" stroke="#555" stroke-width="1.5"/><path d="M202,3 L209,10 M209,3 L202,10" stroke="#555" stroke-width="1.1"/></svg>
<div class="tab on" style="left:1048px;top:102px;width:70px;height:16px;padding-left:6px">Navigator <span style="color:#555">✕</span></div>
<div class="tab" style="left:1118px;top:102px;width:62px;height:16px;padding-left:5px">Histogram</div>
<div class="tab" style="left:1180px;top:102px;width:32px;height:16px;padding-left:5px">Info</div>
<div class="a" style="left:1063px;top:125px;width:170px;height:254px;border:2px solid #f04040;background:#000"></div>
<svg style="left:1065px;top:127px" width="166" height="250"><defs><filter id="bl2" x="0" y="0" width="166" height="250" filterUnits="userSpaceOnUse"><feGaussianBlur stdDeviation="0.8"/></filter></defs><svg width="166" height="250" viewBox="0 0 266 400" preserveAspectRatio="none" style="position:absolute;left:0;top:0"><rect width="266" height="400" fill="url(#bg)"/></svg><g><use href="#art" width="166" height="250" preserveAspectRatio="none"/><use href="#art_s" width="166" height="250" preserveAspectRatio="none"/><use href="#art_h" width="166" height="250" preserveAspectRatio="none"/></g></svg>
<div class="a" style="left:1045px;top:383px;width:195px;height:1px;background:#d8dce2"></div>
<div class="a" style="left:1045px;top:384px;width:60px;height:14px;background:#fff;border:1px solid #b6c0ce"></div>
<div class="t" style="left:1050px;top:387px;font-size:10px;color:#777a85">100%</div>
<svg style="left:1112px;top:388px" width="130" height="12"><path d="M2,8 L6,4 L10,8 Z" fill="none" stroke="#111" stroke-width="1.2"/><path d="M22,5.5 H95" stroke="#cdd3db" stroke-width="3" stroke-linecap="round"/><rect x="55" y="1" width="5" height="10" rx="2" fill="#eef0f3" stroke="#a8b0bc"/><path d="M104,9 L109,3 L113,7 L116,3 L121,9 Z" fill="none" stroke="#111" stroke-width="1.3"/></svg>
<svg style="left:1241px;top:388px" width="10" height="10"><g fill="#888"><rect x="8" y="0" width="1" height="1"/><rect x="6" y="2" width="1" height="1"/><rect x="8" y="2" width="1" height="1"/><rect x="4" y="4" width="1" height="1"/><rect x="6" y="4" width="1" height="1"/><rect x="8" y="4" width="1" height="1"/><rect x="2" y="6" width="1" height="1"/><rect x="4" y="6" width="1" height="1"/><rect x="6" y="6" width="1" height="1"/><rect x="8" y="6" width="1" height="1"/><rect x="0" y="8" width="1" height="1"/><rect x="2" y="8" width="1" height="1"/><rect x="4" y="8" width="1" height="1"/><rect x="6" y="8" width="1" height="1"/><rect x="8" y="8" width="1" height="1"/></g></svg>

<!-- ===== Color panel ===== -->
<div class="a" style="left:1043px;top:405px;width:211px;height:127px;background:#ececec;border-radius:4px 4px 0 0;border-bottom:2px solid #cfcfcf"></div>
<div class="ph" style="left:1043px;top:405px;width:211px;height:25px"></div>
<svg style="left:1043px;top:405px" width="211" height="25"><path d="M0,25 V12 C0,6 5,6 5,12 V25 Z" fill="#cfcfcf"/><path d="M186,25 L196,16 H211 V25 Z" fill="#ececec"/><path d="M197,19 L202,19 L199.5,22 Z" fill="#333"/><path d="M203,17 H210 M203,20 H210 M203,23 H210" stroke="#333" stroke-width="1"/><path d="M190,6.5 H197" stroke="#555" stroke-width="1.5"/><path d="M202,3 L209,10 M209,3 L202,10" stroke="#555" stroke-width="1.1"/></svg>
<div class="tab on" style="left:1048px;top:414px;width:49px;height:16px;padding-left:6px">Color <span style="color:#555">✕</span></div>
<div class="tab" style="left:1098px;top:414px;width:60px;height:16px;padding-left:5px">Swatches</div>
<div class="tab" style="left:1159px;top:414px;width:42px;height:16px;padding-left:5px">Styles</div>
<div class="a" style="left:1063px;top:452px;width:20px;height:20px;background:#fff;border:1px solid #a8a8a8"></div>
<div class="a" style="left:1051px;top:440px;width:20px;height:20px;background:#000;border:1px solid #000;box-shadow:inset 0 0 0 1px #fff,inset 0 0 0 2px #000"></div>
<div class="t" style="left:1087px;top:439px;font-size:10px;color:#111">K</div>
<div class="a" style="left:1100px;top:442px;width:101px;height:7px;background:linear-gradient(90deg,#fff,#000);border:1px solid #c4c4c4"></div>
<svg style="left:1195px;top:448px" width="11" height="8"><path d="M1,7 L5.5,1 L10,7 Z" fill="#fff" stroke="#1e9a2e" stroke-width="1.3"/><path d="M2,7 H9" stroke="#2aa83a" stroke-width="2"/></svg>
<div class="a" style="left:1206px;top:437px;width:32px;height:19px;background:#fff;border:1px solid #c4c8ce"></div>
<div class="t" style="left:1212px;top:442px;font-size:10px;color:#777a85">100</div>
<div class="t" style="left:1239px;top:439px;font-size:10px;color:#111">%</div>
<div class="a" style="left:1048px;top:509px;width:200px;height:17px;border:1px solid #e0e0e0;background:linear-gradient(90deg,#e00 0%,#ff8000 8%,#ffee00 16%,#00a000 33%,#00b0e0 50%,#0020a0 66%,#c000a0 83%,#e00030 96%)"></div>
<div class="a" style="left:1049px;top:510px;width:198px;height:15px;background:linear-gradient(rgba(255,255,255,0.6),rgba(255,255,255,0) 45%,rgba(0,0,0,0) 55%,rgba(0,0,0,0.85))"></div>
<div class="a" style="left:1240px;top:510px;width:7px;height:7px;background:#fff"></div>
<div class="a" style="left:1240px;top:517px;width:7px;height:8px;background:#000"></div>

<!-- ===== Layers panel ===== -->
<div class="a" style="left:1043px;top:535px;width:211px;height:417px;background:#ececec;border-radius:4px 4px 0 0;border-bottom:2px solid #d8d8d8"></div>
<div class="ph" style="left:1043px;top:535px;width:211px;height:24px"></div>
<svg style="left:1043px;top:535px" width="211" height="24"><path d="M0,24 V12 C0,6 5,6 5,12 V24 Z" fill="#cfcfcf"/><path d="M186,24 L196,15 H211 V24 Z" fill="#ececec"/><path d="M197,18 L202,18 L199.5,21 Z" fill="#333"/><path d="M203,16 H210 M203,19 H210 M203,22 H210" stroke="#333" stroke-width="1"/><path d="M190,6.5 H197" stroke="#555" stroke-width="1.5"/><path d="M202,3 L209,10 M209,3 L202,10" stroke="#555" stroke-width="1.1"/></svg>
<div class="tab on" style="left:1048px;top:543px;width:54px;height:16px;padding-left:6px">Layers <span style="color:#555">✕</span></div>
<div class="tab" style="left:1104px;top:543px;width:58px;height:16px;padding-left:5px">Channels</div>
<div class="tab" style="left:1163px;top:543px;width:40px;height:16px;padding-left:5px">Paths</div>
<div class="a" style="left:1047px;top:563px;width:106px;height:18px;background:#fff;border:1px solid #a9b0bb;border-radius:2px"></div>
<div class="a" style="left:1136px;top:564px;width:16px;height:16px;background:linear-gradient(#f2f3f5,#d9dce1);border:1px solid #b5bac3;border-radius:2px"></div>
<svg style="left:1140px;top:571px" width="8" height="4"><path d="M0,0 L7,0 L3.5,3 Z" fill="#9aa0aa"/></svg>
<div class="t" style="left:1051px;top:567px;font-size:10.5px;color:#8c8c8c">Normal</div>
<div class="t" style="left:1156px;top:566px;font-size:10.5px;color:#111">Opacity:</div>
<div class="a" style="left:1197px;top:563px;width:52px;height:18px;background:#fff;border:1px solid #b8bcc4;border-radius:2px"></div>
<div class="a" style="left:1233px;top:564px;width:15px;height:16px;background:linear-gradient(90deg,#f4f4f6,#dcdee2);border-left:1px solid #c8ccd2"></div>
<svg style="left:1238px;top:568px" width="5" height="8"><path d="M0,0 L4,4 L0,8 Z" fill="#a4a8b0"/></svg>
<div class="t" style="left:1203px;top:567px;font-size:10.5px;color:#777a85">100%</div>
<div class="a" style="left:1046px;top:584px;width:205px;height:1px;background:#d8dce2"></div>
<div class="t" style="left:1051px;top:593px;font-size:10.5px;color:#111">Lock:</div>
<svg style="left:1082px;top:590px" width="64" height="16">
<rect x="1.5" y="2.5" width="10" height="10" fill="#fff" stroke="#444"/><rect x="2" y="3" width="3" height="3" fill="#bbb"/><rect x="8" y="3" width="3" height="3" fill="#bbb"/><rect x="5" y="6" width="3" height="3" fill="#bbb"/><rect x="2" y="9" width="3" height="3" fill="#bbb"/><rect x="8" y="9" width="3" height="3" fill="#bbb"/>
<path d="M27,2 L29,4 L22,11 L20,9 Z" fill="#444"/><path d="M20,9 C18,9 16,12 17,14 C19,14 22,13 22,11 Z" fill="#ccc" stroke="#333" stroke-width="0.8"/>
<path d="M40,1 V14 M34,7.5 H46" stroke="#111" stroke-width="1.3"/><path d="M40,0 l-2.5,3 h5 z M40,15 l-2.5,-3 h5 z M33,7.5 l3,-2.5 v5 z M47,7.5 l-3,-2.5 v5 z" fill="#111"/>
<path d="M55,7 C55,2 61,2 61,7" fill="none" stroke="#222" stroke-width="1.4"/><rect x="53.5" y="7" width="9" height="7" fill="#222"/>
</svg>
<div class="t" style="left:1180px;top:593px;font-size:10.5px;color:#111">Fill:</div>
<div class="a" style="left:1197px;top:589px;width:52px;height:18px;background:#fff;border:1px solid #b8bcc4;border-radius:2px"></div>
<div class="a" style="left:1233px;top:590px;width:15px;height:16px;background:linear-gradient(90deg,#f4f4f6,#dcdee2);border-left:1px solid #c8ccd2"></div>
<svg style="left:1238px;top:594px" width="5" height="8"><path d="M0,0 L4,4 L0,8 Z" fill="#a4a8b0"/></svg>
<div class="t" style="left:1203px;top:593px;font-size:10.5px;color:#777a85">100%</div>
<div class="a" style="left:1046px;top:610px;width:190px;height:1px;background:#d8dce2"></div>
<!-- layer list -->
<div class="a" style="left:1044px;top:610px;width:192px;height:322px;overflow:hidden">
 <div class="a" style="left:23px;top:0;width:1px;height:322px;background:#dfe3e9"></div>
 <div class="row" style="top:0;border-top:none;width:192px"><div class="eye"></div><div class="th"></div><div class="ln" style="left:57px">A string</div></div>
 <div class="row" style="top:39px;width:192px"><div class="eye"></div><div class="th"></div><div class="ln" style="left:57px">D string</div></div>
 <div class="row" style="top:78px;width:192px"><div class="eye"></div><div class="th"></div><div class="ln" style="left:57px">G string</div></div>
 <div class="row" style="top:117px;width:192px"><div class="eye"></div><div class="th"></div><div class="ln" style="left:57px">Pick Guard</div></div>
 <div class="row" style="top:156px;width:192px"><div class="a" style="left:24px;top:0;width:168px;height:39px;background:#8e98aa"></div><div class="eye"></div><div class="th"></div><div class="ln" style="left:94px;color:#fff;font-weight:bold">Bass</div></div>
 <div class="row" style="top:195px;width:192px"><div class="eye"></div><div class="th"></div><div class="ln" style="left:57px">Red right trim</div></div>
 <div class="row" style="top:234px;width:192px"><div class="eye"></div><div class="th"></div><div class="ln" style="left:57px">Right black sleeve</div></div>
 <div class="row" style="top:273px;width:192px"><div class="eye"></div><div class="th"></div><div class="ln" style="left:94px">Layer 5</div></div>
 <div class="row" style="top:312px;width:192px"><div class="eye" style="display:none"></div><div class="th"></div></div>
</div>
<!-- eyes -->
<svg style="left:1048px;top:622px" width="16" height="290">
<g id="eyeg"><path d="M1,8 C4,3 12,3 15,8 C12,13 4,13 1,8 Z" fill="#fff" stroke="#222" stroke-width="1.3"/><circle cx="8" cy="7.5" r="3" fill="#111"/><circle cx="7" cy="6.5" r="0.8" fill="#fff"/><path d="M2,10 C5,13 11,13 14,10" fill="none" stroke="#555" stroke-width="0.8"/></g>
<use href="#eyeg" y="39"/><use href="#eyeg" y="78"/><use href="#eyeg" y="117"/><use href="#eyeg" y="156"/><use href="#eyeg" y="195"/><use href="#eyeg" y="234"/><use href="#eyeg" y="273"/>
</svg>
<!-- bass thumb content & mask -->
<svg style="left:1073px;top:770px" width="20" height="30"><path d="M2,12 C4,9 8,10 10,11 L16,6 L18,7 L13,13 C15,16 14,20 11,22 C8,24 4,22 3,19 C1,17 1,14 2,12 Z" fill="#111"/></svg>
<div class="a" style="left:1097px;top:779px;width:6px;height:15px;border:1.5px solid #555;border-radius:3px;background:#ddd"></div>
<div class="a" style="left:1106px;top:768px;width:26px;height:37px;border:1px solid #000"></div><div class="a" style="left:1108px;top:770px;width:22px;height:33px;background:#fff;border:1px solid #000"></div><div class="a" style="left:1112px;top:768px;width:14px;height:1px;background:#8e98aa"></div><div class="a" style="left:1112px;top:804px;width:14px;height:1px;background:#8e98aa"></div><div class="a" style="left:1106px;top:774px;width:1px;height:25px;background:#8e98aa"></div><div class="a" style="left:1131px;top:774px;width:1px;height:25px;background:#8e98aa"></div>
<div class="a" style="left:1124px;top:778px;width:4px;height:4px;background:#000;border-radius:50%"></div>
<svg style="left:1073px;top:848px" width="20" height="30"><path d="M4,4 L8,10 L9,12 L6,11 Z" fill="#111"/></svg>
<div class="a" style="left:1097px;top:896px;width:6px;height:15px;border:1.5px solid #555;border-radius:3px;background:#ddd"></div>
<div class="a" style="left:1108px;top:887px;width:22px;height:32px;background:#fff;border:1px solid #000"></div>
<div class="a" style="left:1120px;top:901px;width:2px;height:1px;background:#000"></div>
<div class="a" style="left:1085px;top:901px;width:2px;height:1px;background:#000"></div>
<!-- layers scrollbar -->
<div class="a" style="left:1236px;top:610px;width:15px;height:322px;background-color:#eef0f3;background-image:repeating-linear-gradient(45deg,#e9ecef 0 1px,transparent 1px 2px)"></div>
<div class="a" style="left:1237px;top:611px;width:13px;height:13px;background:#e9ecf0;border:1px solid #dde1e7"></div>
<div class="a" style="left:1237px;top:625px;width:13px;height:228px;background:#eceef1;border:1px solid #e0e3e8"></div>
<div class="a" style="left:1237px;top:918px;width:13px;height:13px;background:#e9ecf0;border:1px solid #dde1e7"></div>
<svg style="left:1240px;top:615px" width="8" height="5"><path d="M0,4 L3.5,0 L7,4 Z" fill="#8a93a3"/></svg>
<svg style="left:1240px;top:923px" width="8" height="5"><path d="M0,0 L3.5,4 L7,0 Z" fill="#8a93a3"/></svg>
<!-- layers bottom toolbar -->
<svg style="left:1044px;top:932px" width="210" height="18">
<rect x="4" y="6" width="9" height="6" rx="3" fill="none" stroke="#666" stroke-width="1.4"/><rect x="11" y="6" width="9" height="6" rx="3" fill="none" stroke="#666" stroke-width="1.4"/>
<text x="36" y="14" font-family="Liberation Serif" font-style="italic" font-weight="bold" font-size="15" fill="#333">fx</text><path d="M52,14.5 h3 l-1.5,2 z" fill="#111"/>
<rect x="64" y="3" width="13" height="12" fill="#999" stroke="#333" stroke-width="1.1"/><circle cx="70.5" cy="9" r="4" fill="#fff"/>
<circle cx="98" cy="9" r="5.5" fill="#fff" stroke="#333" stroke-width="1.2"/><path d="M94,13 A5.5,5.5 0 0 1 102,5 Z" fill="#222"/><path d="M106,14 h3 l-1.5,2 z" fill="#111"/>
<path d="M119.5,5 H124 L125,6 H130.5 V13.5 H119.5 Z" fill="#eee" stroke="#333" stroke-width="1"/>
<rect x="147" y="4.5" width="9" height="9" fill="#fff" stroke="#222" stroke-width="1.1"/><path d="M148,9 H152 V13 Z" fill="#333"/>
<path d="M174,5 H184 M175,6 L176,15 H182 L183,6" fill="#f0f0f0" stroke="#222" stroke-width="1.2"/><path d="M177,3 H181" stroke="#222"/><path d="M178,8 V13 M180,8 V13" stroke="#222" stroke-width="0.8"/>
</svg>
<svg style="left:1241px;top:938px" width="10" height="10"><g fill="#888"><rect x="8" y="0" width="1" height="1"/><rect x="6" y="2" width="1" height="1"/><rect x="8" y="2" width="1" height="1"/><rect x="4" y="4" width="1" height="1"/><rect x="6" y="4" width="1" height="1"/><rect x="8" y="4" width="1" height="1"/><rect x="2" y="6" width="1" height="1"/><rect x="4" y="6" width="1" height="1"/><rect x="6" y="6" width="1" height="1"/><rect x="8" y="6" width="1" height="1"/><rect x="0" y="8" width="1" height="1"/><rect x="2" y="8" width="1" height="1"/><rect x="4" y="8" width="1" height="1"/><rect x="6" y="8" width="1" height="1"/><rect x="8" y="8" width="1" height="1"/></g></svg>
<!-- frame bottom -->
<div class="a" style="left:1px;top:960px;width:1257px;height:13px;background:linear-gradient(#c9cfd8 0,#dfe3e9 2px,#eceef1 4px,#e9ebef 100%)"></div>
<div class="a" style="left:14px;top:962px;width:18px;height:3px;background:#111;border:1px solid #777"></div>
<svg style="left:1246px;top:950px" width="22" height="20"><path d="M2,15 C6,17 12,17 15,14 C17,11 17,6 15,3" fill="none" stroke="#c8bfb2" stroke-width="1.4"/></svg>

<!-- taskbar -->
<div class="a" style="left:0;top:974px;width:1280px;height:50px;background:linear-gradient(#ffffff 0%,#fdfdfd 24%,#e7eaee 29%,#e3e6ea 60%,#dde0e5 100%)"></div>
<svg style="left:12px;top:979px" width="20" height="16"><path d="M2,4 C5,2 7,3 9,4 L8,9 C6,8 4,8 1,9 Z M10,4 C12,5 15,5 18,3 L17,8 C14,10 12,9 9,9 Z M1,10 C4,9 6,9 8,10 L7,15 C5,14 3,14 0,15 Z M9,10 C11,11 14,11 17,9 L16,14 C13,16 11,15 8,15 Z" fill="#b9bec6"/></svg>
<!-- quick launch row 1 -->
<svg style="left:56px;top:978px" width="160" height="20">
<defs>
<linearGradient id="csg" x1="0" y1="0" x2="0" y2="1"><stop offset="0" stop-color="#e8e0a0"/><stop offset="0.5" stop-color="#f4f0d0"/><stop offset="0.55" stop-color="#d8dcf8"/><stop offset="1" stop-color="#6070d8"/></linearGradient>
<linearGradient id="psg" x1="0" y1="0" x2="0" y2="1"><stop offset="0" stop-color="#3c78cc"/><stop offset="1" stop-color="#1a4690"/></linearGradient>
<radialGradient id="ffg" cx="0.55" cy="0.4" r="0.6"><stop offset="0" stop-color="#5aa0e8"/><stop offset="1" stop-color="#1a4aa0"/></radialGradient>
<linearGradient id="pkg" x1="0" y1="0" x2="1" y2="1"><stop offset="0" stop-color="#f8d860"/><stop offset="1" stop-color="#b87810"/></linearGradient>
</defs>
<circle cx="9" cy="9.5" r="8" fill="url(#csg)" stroke="#111" stroke-width="1.3"/><path d="M8,3.5 C10,3 11,4 10.5,5.5 L13,6 L13,7 L10.5,7.2 L11,10 L13.5,15.5 L11.5,16 L9.5,12 L7.5,16 L5.5,15.5 L8,10 L7.5,6.5 L5,8 L4.5,7 L8,5 Z" fill="#111"/>
<path d="M29,4 L41,2 L43,15 L31,17 Z" fill="#fff" stroke="#2a70d0" stroke-width="1.5"/><path d="M32,10 C32,6 39,5 40,9 L33,10 C33,13 37,14 40,12" fill="none" stroke="#1e5cc0" stroke-width="2.2"/><circle cx="43" cy="5" r="1.6" fill="#f06030"/>
<circle cx="64" cy="9.5" r="7.5" fill="url(#ffg)"/><path d="M57,6 C56,11 58,16 64,17.5 C69,18 72,15 72.5,12 C70,14 66,14 64,12 C61,10 62,6 65,5 C62,3 59,3 57,6 Z" fill="#ef7a1a"/><path d="M57,6 C58,4 60,2 63,2 C61,4 60,6 60,8 Z" fill="#f6a030"/>
<rect x="83" y="2" width="16" height="15" fill="url(#psg)" stroke="#163c7c" stroke-width="0.8"/><text x="85.5" y="13" font-family="Liberation Sans" font-weight="bold" font-size="9" fill="#fff">Ps</text>
<circle cx="118" cy="9.5" r="8" fill="#fff"/><path d="M118,1.5 A8,8 0 0 1 126,9.5" fill="none" stroke="#38a038" stroke-width="2"/><path d="M126,9.5 A8,8 0 0 1 118,17.5" fill="none" stroke="#e8a020" stroke-width="2"/><path d="M118,17.5 A8,8 0 0 1 110,9.5 A8,8 0 0 1 118,1.5" fill="none" stroke="#2a6ad0" stroke-width="2"/><circle cx="118" cy="9.5" r="5.2" fill="#2a5fc8"/><path d="M116,6.5 L121.5,9.5 L116,12.5 Z" fill="#fff"/>
<rect x="137" y="1.5" width="16" height="16" fill="url(#pkg)" stroke="#6a4a10" stroke-width="0.8"/><path d="M145,3.5 C143,6 139.5,8 139.5,10.5 C139.5,12.5 142,13 144,11.5 L143,15 H147 L146,11.5 C148,13 150.5,12.5 150.5,10.5 C150.5,8 147,6 145,3.5 Z" fill="#1c3c90"/><text x="143" y="11" font-family="Liberation Serif" font-weight="bold" font-size="5.5" fill="#f8e090">P</text>
</svg>
<!-- quick launch row 2 -->
<svg style="left:56px;top:1002px" width="160" height="20">
<defs><linearGradient id="fdg" x1="0" y1="0" x2="0" y2="1"><stop offset="0" stop-color="#fff0a8"/><stop offset="1" stop-color="#e8b840"/></linearGradient></defs>
<path d="M2,5 H8 L10,7 H17 V16 H2 Z" fill="url(#fdg)" stroke="#b88820" stroke-width="0.9"/><path d="M2,8 H17" stroke="#fff6c8" stroke-width="0.8"/>
<rect x="32" y="1" width="4" height="4" fill="#80b020"/><rect x="37" y="1" width="4" height="4" fill="#e02870"/><rect x="32" y="6" width="4" height="4" fill="#c0a020"/><rect x="37" y="6" width="4" height="4" fill="#a030b0"/><path d="M29,15.5 H45" stroke="#333" stroke-width="1.5"/><rect x="34" y="11" width="6" height="5" fill="#e8c040" stroke="#a08020" stroke-width="0.6"/>
<path d="M60,2 L68,1 V12 L60,13 Z" fill="#70b8f4" stroke="#3c7cc8" stroke-width="0.9"/><path d="M60,14 C60,18 68,18 68,14 L66,12 H62 Z" fill="#d8d8f0" stroke="#9090c0" stroke-width="0.8"/>
<circle cx="92" cy="9" r="7.5" fill="#dfe4ec" stroke="#a0a8b4" stroke-width="0.8"/><circle cx="92" cy="9" r="2" fill="#fff" stroke="#9aa"/><path d="M90,4 L96,3 V11 M90,4 V13" stroke="#2060d0" stroke-width="1.7" fill="none"/><circle cx="88.5" cy="13" r="2" fill="#2060d0"/><circle cx="94.5" cy="11" r="2" fill="#2060d0"/>
<path d="M111,8 H127 V16 H111 Z" fill="#f4cc60" stroke="#a88020" stroke-width="0.9"/><path d="M113,2 H123 L125,4 V10 H113 Z" fill="#fff" stroke="#6080b0" stroke-width="0.8"/><path d="M115,5 H122 M115,7 H122" stroke="#8098c0" stroke-width="0.7"/>
<circle cx="146" cy="8.5" r="6.5" fill="#fff" stroke="#1e88e0" stroke-width="2.8"/><path d="M144,6 L147,10" stroke="#1e88e0" stroke-width="1.6"/><path d="M149,12 L152.5,15.5" stroke="#1e88e0" stroke-width="2.8"/>
</svg>
<svg style="left:228px;top:980px" width="10" height="8"><path d="M1,1 L4,4 L1,7 M5,1 L8,4 L5,7" fill="none" stroke="#5a6070" stroke-width="1.2"/></svg>
<!-- task buttons -->
<svg style="left:254px;top:978px" width="18" height="16"><circle cx="6" cy="5" r="3" fill="#4a90e0"/><path d="M1,14 C1,9 11,9 11,14 Z" fill="#4a90e0"/><circle cx="12" cy="6" r="3.2" fill="#50c050"/><path d="M6,15 C6,10 18,10 18,15 Z" fill="#50c050"/></svg>
<div class="t" style="left:275px;top:981px;font-size:11px;font-weight:bold;color:#b9bec7;letter-spacing:0.33px">Windows Live Mes...</div>
<svg style="left:414px;top:977px" width="18" height="18"><circle cx="9" cy="9" r="8" fill="#dde2ea" stroke="#98a0ac"/><path d="M7,4 L13,3 V11 M7,4 V13" stroke="#2a6ad0" stroke-width="1.8" fill="none"/><circle cx="5.5" cy="13" r="2" fill="#2a6ad0"/><circle cx="11.5" cy="11" r="2" fill="#2a6ad0"/></svg>
<div class="t" style="left:435px;top:981px;font-size:11px;font-weight:bold;color:#b9bec7;letter-spacing:0.33px">iTunes</div>
<svg style="left:574px;top:977px" width="18" height="18"><circle cx="9" cy="9" r="7.5" fill="#1ea0e8"/><circle cx="4" cy="4" r="3" fill="#1ea0e8"/><circle cx="14" cy="14" r="3" fill="#1ea0e8"/><text x="5" y="13.5" font-family="Liberation Sans" font-weight="bold" font-size="11" fill="#fff">S</text></svg>
<div class="t" style="left:596px;top:981px;font-size:11px;font-weight:bold;color:#b9bec7;letter-spacing:0.33px">Skype™ - moshers...</div>
<svg style="left:734px;top:977px" width="18" height="18"><circle cx="9.5" cy="9" r="7.5" fill="#2a5ab0"/><path d="M2.5,6 C1.5,11 3.5,16 9.5,17.5 C14.5,18 17.5,15 18,12 C15.5,14 11.5,14 9.5,12 C6.5,10 7.5,6 10.5,5 C7.5,3 4.5,3 2.5,6 Z" fill="#ef7a1a"/></svg>
<div class="t" style="left:755px;top:981px;font-size:11px;font-weight:bold;color:#b9bec7;letter-spacing:0.33px">main_img71625839...</div>
<div class="a" style="left:247px;top:1004px;width:157px;height:17px;background:linear-gradient(#d4d9e1,#c5ccd6);border:1px solid #aab2be;border-radius:3px"></div>
<div class="a" style="left:256px;top:1004px;width:15px;height:15px;background:linear-gradient(#2e6cc4,#163e86)"></div>
<div class="t" style="left:258px;top:1007px;font-size:8px;font-weight:bold;color:#fff">Ps</div>
<div class="t" style="left:276px;top:1007px;font-size:11px;font-weight:bold;color:#fff;letter-spacing:0.22px">Adobe Photoshop ...</div>
<!-- lang -->
<div class="a" style="left:985px;top:991px;width:11px;height:16px;background:#8a93a6;overflow:hidden"><div class="t" style="left:1px;top:3px;font-size:10.5px;color:#f2f4f8;letter-spacing:-0.5px">EN</div></div>
<!-- tray -->
<svg style="left:1034px;top:979px" width="165" height="40">
<!-- row1 -->
<rect x="5" y="2" width="9" height="8" fill="#3a4a90" stroke="#8898d0" stroke-width="0.8"/><rect x="1" y="6" width="9" height="8" fill="#2a3a80" stroke="#a0b0e0" stroke-width="0.8"/><path d="M2,16 H11 M7,10 V16" stroke="#8090c0" stroke-width="1"/>
<circle cx="27" cy="9" r="7" fill="#c4c8cc"/><circle cx="24" cy="5" r="3" fill="#c4c8cc"/><circle cx="30" cy="13" r="3" fill="#c4c8cc"/><path d="M24,6 L30,12 M30,6 L24,12" stroke="#fff" stroke-width="2"/>
<circle cx="45" cy="9" r="7.5" fill="#dfe4ec" stroke="#98a0ac" stroke-width="0.8"/><path d="M43,4 L49,3 V11 M43,4 V13" stroke="#2060d0" stroke-width="1.6" fill="none"/><circle cx="41.5" cy="13" r="2" fill="#2060d0"/><circle cx="47.5" cy="11" r="2" fill="#2060d0"/>
<rect x="57" y="2" width="7" height="7" fill="#f0c800"/><rect x="64" y="2" width="7" height="7" fill="#111"/><rect x="57" y="9" width="7" height="7" fill="#008000"/><rect x="64" y="9" width="7" height="7" fill="#e00"/>
<circle cx="82" cy="5.5" r="3.6" fill="#58b848"/><path d="M75,16 C75,10 89,10 89,16 Z" fill="#58b848"/>
<path d="M93,1 H107 L109,16 H93 Z" fill="#fff" stroke="#aab" stroke-width="0.6"/><path d="M96,4 H105 L96,13 H106" fill="none" stroke="#202a80" stroke-width="2.2"/><path d="M102,9 L106,13 H99 Z" fill="#a0b040"/>
<circle cx="121" cy="6.5" r="4.8" fill="#30b040"/><path d="M118.5,6.5 L120.5,8.5 L124,4.5" stroke="#fff" stroke-width="1.4" fill="none"/><path d="M110,5 L114,9 M110,16 L114,12 M118,16 L122,12" stroke="#8898a8" stroke-width="1" fill="none"/>
<path d="M131,4 H146 V17 H133 Z" fill="#fff" stroke="#999" stroke-width="0.6"/><rect x="132" y="5" width="12" height="10" fill="#e02020"/><path d="M134,7 L142,13 M142,7 L134,13" stroke="#fff" stroke-width="2"/>
<rect x="152" y="1" width="12" height="12" fill="#80b820"/><circle cx="156" cy="12" r="5" fill="#606870"/><path d="M150,6 C152,3 155,3 157,5" stroke="#333" fill="none"/><circle cx="160" cy="14" r="2.5" fill="#6070d0"/>
<!-- row2 -->
<circle cx="9" cy="29" r="6.5" fill="#fff" stroke="#30a0f0" stroke-width="2.6"/><path d="M8,26 L11,30" stroke="#30a0f0" stroke-width="1.4"/><path d="M12,33 L15.5,36.5" stroke="#30a0f0" stroke-width="2.6"/>
<circle cx="27" cy="29" r="6" fill="#fff" stroke="#e02020" stroke-width="1.5"/><path d="M23,33 L31,25" stroke="#e02020" stroke-width="1.4"/><path d="M26,24 L25,34 H28 Z" fill="#111"/>
<rect x="41" y="21" width="8" height="7" fill="#2a3a80" stroke="#8898d0" stroke-width="0.8"/><rect x="37" y="25" width="8" height="7" fill="#3a4a90" stroke="#a0b0e0" stroke-width="0.8"/><path d="M46,30 L53,37 M53,30 L46,37" stroke="#e02020" stroke-width="2.2"/>
<circle cx="62" cy="28" r="6" fill="#808890" stroke="#555" stroke-width="0.8"/><circle cx="62" cy="28" r="2.5" fill="#aab"/><path d="M67,34 C70,32 71,29 70,26 M68,36 C72,33 73,29 72,25" stroke="#8090d0" fill="none" stroke-width="0.9"/>
<path d="M79,23 L82,20 V22 H86 V25 H82 V27 Z" fill="#40a040"/><rect x="77" y="27" width="12" height="8" fill="#5a6070" transform="rotate(-12 83 31)"/><rect x="80" y="29" width="6" height="3" fill="#ccd"/>
<rect x="92" y="21" width="7" height="7" fill="#70b030"/><rect x="100" y="21" width="7" height="7" fill="#70b030"/><rect x="92" y="29" width="7" height="7" fill="#70b030"/><rect x="100" y="29" width="7" height="7" fill="#8030a0"/>
<path d="M114,22 L121,20 L128,22 C128,30 125,35 121,37 C117,35 114,30 114,22 Z" fill="#c82030" stroke="#5060a0" stroke-width="0.9"/><path d="M118.5,26 L123.5,31 M123.5,26 L118.5,31" stroke="#fff" stroke-width="1.6"/>
<rect x="134" y="22" width="12" height="12" fill="#d8a840" stroke="#806020" stroke-width="0.8"/><rect x="141" y="27" width="8" height="9" fill="#c02020"/><rect x="139" y="31" width="5" height="5" fill="#3070c0"/><path d="M134,21 L146,33" stroke="#e0b040" stroke-width="1.6"/>
</svg>
<div class="t" style="left:1222px;top:983px;font-size:11.5px;font-weight:bold;color:#9ea5b3">22:52</div>
<div class="t" style="left:1216px;top:1003px;font-size:11.5px;font-weight:bold;color:#9ea5b3">Sunday</div>
</body></html>
